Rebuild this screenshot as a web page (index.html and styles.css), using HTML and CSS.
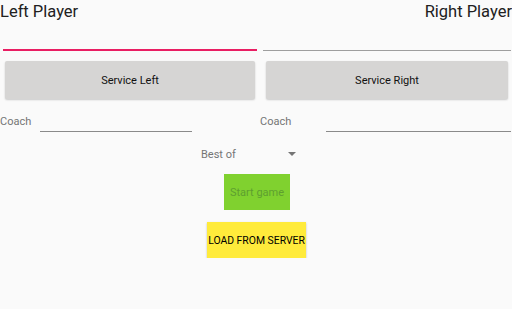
FILE: index.html
```html
<!DOCTYPE html>
<html lang="en">
<head>
  <meta charset="UTF-8" />
  <meta name="viewport" content="width=device-width, initial-scale=1.0"/>
  <title>Match setup</title>
  <link rel="stylesheet" href="styles.css">
</head>
<body>
  <div class="players">
    <div class="player-name">Left Player</div>
    <div class="player-name">Right Player</div>
  </div>

  <div class="name-inputs">
    <div class="field field-left active"></div>
    <div class="field field-right"></div>
  </div>

  <div class="service">
    <button class="service-btn service-left">Service Left</button>
    <button class="service-btn service-right">Service Right</button>
  </div>

  <div class="coaches">
    <div class="coach coach-left">
      <span class="coach-label">Coach</span>
      <span class="coach-line"></span>
    </div>
    <div class="coach coach-right">
      <span class="coach-label">Coach</span>
      <span class="coach-line"></span>
    </div>
  </div>

  <div class="best-of">
    <span class="best-label">Best of</span>
    <span class="arrow"></span>
  </div>

  <div class="actions">
    <button class="start-btn" disabled>Start game</button>
    <button class="load-btn">LOAD FROM SERVER</button>
  </div>
</body>
</html>
```

FILE: styles.css
```css
/* ======= Общие стили ======= */
body {
  margin: 0;
  background: #fafafa;
  font-family: Roboto, "Noto Sans", sans-serif;
  color: #212121;
}
button {
  font-family: Roboto, "Noto Sans", sans-serif;
  border: none;
  padding: 0;
  white-space: nowrap;
  cursor: pointer;
}

/* ======= Имена игроков ======= */
.players {
  display: flex;
  justify-content: space-between;
  height: 24px;
}
.player-name {
  font-size: 16.5px;
  line-height: 24px;
}

.name-inputs {
  display: flex;
  gap: 6px;
  padding: 0 1px 0 3px;
  height: 27px;
}
.field {
  flex: 254;
  height: 26px;
  border-bottom: 1px solid #9e9e9e;
}
.field-right {
  flex: 248;
}
.field.active {
  height: 25px;
  border-bottom: 2px solid #e91e63;
}

/* ======= Подача ======= */
.service {
  display: flex;
  gap: 11px;
  padding: 10px 4px 0 5px;
}
.service-btn {
  height: 38px;
  background: #d6d5d4;
  font-size: 11px;
  color: #111;
  border-radius: 2px;
  box-shadow: 0 1px 2px rgba(0, 0, 0, 0.2);
}
.service-left {
  width: 250px;
}
.service-right {
  flex: 1;
}

/* ======= Тренеры ======= */
.coaches {
  display: flex;
  margin-top: 14px;
  height: 22px;
}
.coach {
  display: flex;
  align-items: flex-end;
}
.coach-left {
  width: 260px;
}
.coach-right {
  flex: 1;
}
.coach-label {
  font-size: 11px;
  color: #757575;
  line-height: 14px;
  margin-bottom: 6px;
}
.coach-left .coach-line {
  width: 152px;
  margin-left: 9px;
}
.coach-right .coach-line {
  flex: 1;
  margin-left: 35px;
  margin-right: 1px;
}
.coach-line {
  height: 1px;
  background: #8a8a8a;
  margin-bottom: 3px;
}

/* ======= Best of ======= */
.best-of {
  display: flex;
  align-items: center;
  margin-left: 201px;
  margin-top: 10px;
  height: 18px;
}
.best-label {
  font-size: 11px;
  color: #757575;
}
.arrow {
  margin-left: 52px;
  width: 0;
  height: 0;
  border-left: 4px solid transparent;
  border-right: 4px solid transparent;
  border-top: 4px solid #757575;
}

/* ======= Кнопки ======= */
.actions {
  display: flex;
  flex-direction: column;
  align-items: center;
  gap: 12px;
  margin-top: 11px;
}
.start-btn {
  width: 66px;
  height: 36px;
  margin-left: 2px;
  background: #80d12f;
  color: #5e9f2f;
  font-size: 11px;
  cursor: default;
}
.load-btn {
  width: 99px;
  height: 36px;
  margin-left: 1px;
  background: #ffeb3b;
  color: #000;
  font-size: 10.4px;
  box-shadow: 0 1px 2px rgba(0, 0, 0, 0.25);
}
```
